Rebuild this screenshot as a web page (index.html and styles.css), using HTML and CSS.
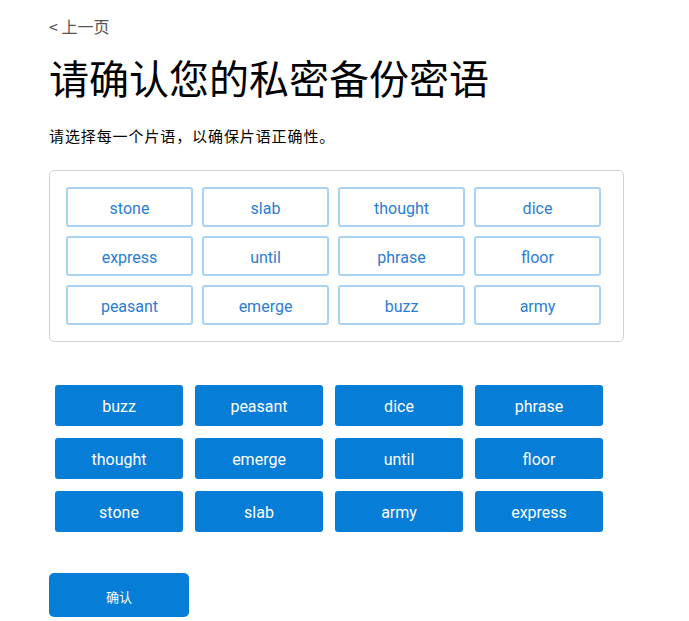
FILE: index.html
```html
<!DOCTYPE html>
<html lang="zh">
<head>
<meta charset="utf-8">
<title>请确认您的私密备份密语</title>
<link rel="stylesheet" href="styles.css">
</head>
<body>
<main class="page">
  <a class="back" href="#">&lt; 上一页</a>
  <h1 class="title">请确认您的私密备份密语</h1>
  <p class="subtitle">请选择每一个片语，以确保片语正确性。</p>
  <div class="slots">
    <div class="slot">stone</div>
    <div class="slot">slab</div>
    <div class="slot">thought</div>
    <div class="slot">dice</div>
    <div class="slot">express</div>
    <div class="slot">until</div>
    <div class="slot">phrase</div>
    <div class="slot">floor</div>
    <div class="slot">peasant</div>
    <div class="slot">emerge</div>
    <div class="slot">buzz</div>
    <div class="slot">army</div>
  </div>
  <div class="choices">
    <button class="word">buzz</button>
    <button class="word">peasant</button>
    <button class="word">dice</button>
    <button class="word">phrase</button>
    <button class="word">thought</button>
    <button class="word">emerge</button>
    <button class="word">until</button>
    <button class="word">floor</button>
    <button class="word">stone</button>
    <button class="word">slab</button>
    <button class="word">army</button>
    <button class="word">express</button>
  </div>
  <button class="confirm">确认</button>
</main>
</body>
</html>
```

FILE: styles.css
```css
* { box-sizing: border-box; }
html, body { margin: 0; padding: 0; background: #fff; }
body {
  font-family: "Noto Sans CJK SC", "Noto Sans", sans-serif;
  color: #000;
}
.page {
  padding: 17px 0 0 49px;
  display: flex;
  flex-direction: column;
  align-items: flex-start;
}
.back {
  font-size: 16px;
  line-height: 18px;
  height: 18px;
  color: #555;
  text-decoration: none;
}
.title {
  margin: 18px 0 0;
  font-size: 40px;
  line-height: 48px;
  font-weight: 400;
}
.subtitle {
  margin: 25px 0 0;
  font-size: 15px;
  line-height: 20px;
  letter-spacing: 0.9px;
}
.slots {
  margin-top: 24px;
  width: 575px;
  border: 1px solid #d2d2d2;
  border-radius: 5px;
  padding: 16px;
  display: grid;
  grid-template-columns: repeat(4, 127px);
  grid-auto-rows: 40px;
  gap: 9px;
}
.slot {
  border: 2px solid #a9d3f3;
  border-radius: 3px;
  display: flex;
  align-items: center;
  justify-content: center;
  padding-top: 2px;
  font-family: Roboto, "Noto Sans", sans-serif;
  font-size: 16px;
  color: #2b7dd3;
}
.choices {
  margin: 43px 0 0 6px;
  display: grid;
  grid-template-columns: repeat(4, 128px);
  grid-auto-rows: 41px;
  gap: 12px;
}
.word {
  border: none;
  border-radius: 3px;
  background: #067dd7;
  color: #fff;
  font-family: Roboto, "Noto Sans", sans-serif;
  font-size: 16px;
  padding: 2px 0 0;
  cursor: pointer;
}
.confirm {
  margin-top: 41px;
  width: 140px;
  height: 44px;
  border: none;
  border-radius: 5px;
  background: #067dd7;
  color: #fff;
  font-family: "Noto Sans CJK SC", sans-serif;
  font-size: 13px;
  padding: 3px 0 0;
  cursor: pointer;
}
```
